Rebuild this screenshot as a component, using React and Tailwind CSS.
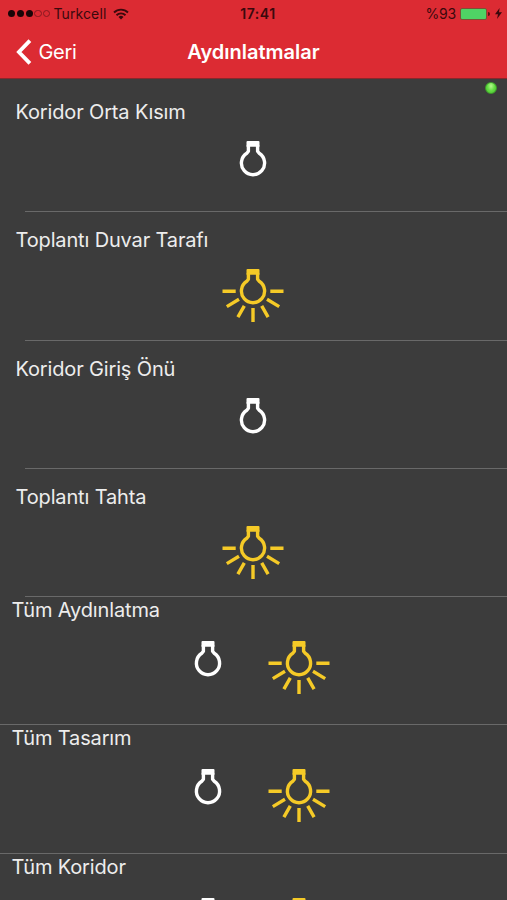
// ── Seed data ────────────────────────────────────────────────────────────────
const lights = [
  { name: "Koridor Orta Kısım", on: false },
  { name: "Toplantı Duvar Tarafı", on: true },
  { name: "Koridor Giriş Önü", on: false },
  { name: "Toplantı Tahta", on: true },
];

const groups = ["Tüm Aydınlatma", "Tüm Tasarım", "Tüm Koridor"];

// ── Icons ────────────────────────────────────────────────────────────────────
function Bulb({ on }) {
  return (
    <svg
      width="62"
      height="54"
      viewBox="0 0 62 54"
      fill="none"
      stroke="currentColor"
      strokeWidth="3.4"
      className={on ? "text-[#f5ca27]" : "text-white"}
    >
      <path d="M26.4 4v6.2l-1.6 2.1a11.6 11.6 0 1 0 12.4 0l-1.6-2.1V4" strokeLinejoin="round" />
      <path d="M24.5 1.1q0-1 1-1h11q1 0 1 1v4.6h-13z" fill="currentColor" stroke="none" />
      {on && (
        <path d="M.5 22.2h13.2M48.3 22.2h13.2M4.8 37.6l12.2-7.3M57.2 37.6L45 30.3M15.9 48.2l6.4-11.4M46.1 48.2l-6.4-11.4M31 39v14" />
      )}
    </svg>
  );
}

function Wifi() {
  return (
    <svg width="16" height="12" viewBox="0 0 16 12" fill="none" stroke="currentColor" strokeWidth="1.9">
      <path d="M1 4.5a10 10 0 0 1 14 0M3.5 7.2a6.4 6.4 0 0 1 9 0" />
      <path d="M5.5 9a3.7 3.7 0 0 1 5 0L8 11.6z" fill="currentColor" stroke="none" />
    </svg>
  );
}

function BackArrow() {
  return (
    <svg width="16" height="26" viewBox="0 0 16 26" fill="none" stroke="currentColor" strokeWidth="3.8">
      <path d="M13.9 1.6L2.9 13l11 11.4" />
    </svg>
  );
}

function StatusBar() {
  return (
    <div className="grid grid-cols-3 h-[27px] items-center pl-2 pr-[5px] text-[14px] text-[#3a090d]">
      <div className="flex items-center whitespace-nowrap">
        <div className="flex gap-[1.5px]">
          {[1, 1, 1, 0, 0].map((full, i) => (
            <span
              key={i}
              className={`size-[7.3px] rounded-full ${full ? "bg-[#190507]" : "border border-[#871920]"}`}
            />
          ))}
        </div>
        <span className="ml-[3px] mr-[7px] tracking-[0.1px]">Turkcell</span>
        <Wifi />
      </div>
      <span className="pl-[6px] text-center text-[14px] font-semibold tracking-[0.5px]">17:41</span>
      <div className="flex items-center justify-end">
        <span className="mr-1 tracking-[-0.2px]">%93</span>
        <span className="w-[27px] h-3 rounded-[2px] border border-[#7d5136] bg-[#4fd365]" />
        <span className="ml-px mr-[5px] w-[2px] h-1 rounded-r bg-[#5b1014]" />
        <svg width="7" height="11" viewBox="0 0 7 11" fill="currentColor">
          <path d="M4.6 0L0 6.2h3L2 11l5-6.7H4z" />
        </svg>
      </div>
    </div>
  );
}

function LightRow({ name, on }) {
  return (
    <li className="h-[128.3px] flex flex-col">
      <span className="pl-[15.5px] pt-[13.2px] h-[57px] leading-[30px]">{name}</span>
      <div className="flex-1 flex justify-center items-start pr-[1.4px]">
        <Bulb on={on} />
      </div>
      <div className="ml-[25px] h-px bg-[#696969]" />
    </li>
  );
}

function GroupRow({ name }) {
  return (
    <li className="h-[128.3px] flex flex-col">
      <span className="pl-[11.5px] -mt-[2px] h-[46px] leading-[30px]">{name}</span>
      <div className="flex-1 flex justify-center items-start gap-[29px]">
        <Bulb on={false} />
        <Bulb on />
      </div>
      <div className="h-px bg-[#696969]" />
    </li>
  );
}

export default function App() {
  return (
    <div className="w-full h-screen overflow-hidden bg-[#3c3c3c] font-['Inter','Liberation_Sans',sans-serif]">
      <header className="h-[79px] bg-[#dc2b33] border-b border-[#87282c]">
        <StatusBar />
        <div className="grid grid-cols-[150px_1fr_150px] h-[50px] items-center text-white">
          <div className="flex items-center pl-[15.5px] gap-[7px]">
            <BackArrow />
            <span className="text-[20px] tracking-[-0.3px]">Geri</span>
          </div>
          <h1 className="text-center text-[20px] font-semibold tracking-[0px]">Aydınlatmalar</h1>
        </div>
      </header>

      <main className="relative pt-[5px] text-[20px] tracking-[-0.15px] text-[#ededed]">
        {/* connection indicator */}
        <span className="absolute right-[10px] top-[3px] size-3 rounded-full border border-[#3e9c2b] bg-radial-[at_50%_30%] from-[#b6f78e] via-[#63dc43] to-[#45bd2c]" />
        <ul>
          {lights.map((light) => (
            <LightRow key={light.name} {...light} />
          ))}
          {groups.map((name) => (
            <GroupRow key={name} name={name} />
          ))}
        </ul>
      </main>
    </div>
  );
}
